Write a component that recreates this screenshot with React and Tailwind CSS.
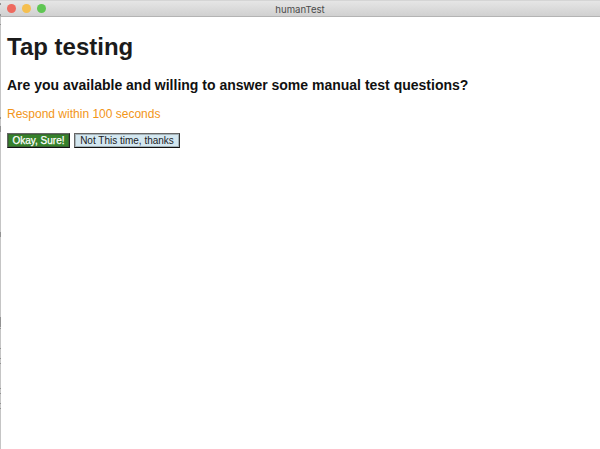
const edgeMarks = [
  ['top', 3, 2], ['upper', 14, 2], ['a', 24, 1], ['b', 117, 2], ['c', 126, 6],
  ['d', 232, 5], ['e', 317, 10], ['f', 328, 1], ['g', 348, 1], ['h', 358, 1],
  ['i', 363, 1], ['j', 388, 1], ['k', 393, 1], ['l', 403, 1], ['m', 408, 1],
];

function TitleBar() {
  return (
    <header className="relative flex h-[17px] shrink-0 items-center justify-center border-t border-b border-t-[#d5d5d5] border-b-[#b4b4b4] bg-linear-to-b from-[#e6e6e6] to-[#d0d0d0]">
      <div className="absolute top-[3px] left-[7px] flex gap-[6px]">
        <span className="size-[9px] rounded-full bg-[#ee6a5f]" />
        <span className="size-[9px] rounded-full bg-[#f5bf4f]" />
        <span className="size-[9px] rounded-full bg-[#5fc653]" />
      </div>
      <h2 className="pt-[2px] font-[Inter,sans-serif] text-[9.6px] leading-[13px] text-[#4b4b4b]">humanTest</h2>
    </header>
  );
}

export default function App() {
  return (
    <div className="relative flex h-[449px] w-[600px] flex-col overflow-hidden bg-white font-['Liberation_Sans',Arial,sans-serif]">
      <TitleBar />
      <main className="flex-1 border-l border-[#c5c5c5] pt-[16px] pl-[6px] text-[#1b1b1b]">
        <h1 className="text-[24px] leading-[28px] font-bold whitespace-nowrap">Tap testing</h1>
        <h3 className="mt-[16px] text-[14px] leading-[16px] font-bold whitespace-nowrap text-[#111]">
          Are you available and willing to answer some manual test questions?
        </h3>
        <p className="mt-[14px] text-[12px] leading-[14px] text-[#f29518]">Respond within 100 seconds</p>
        <div className="mt-[12px] flex gap-[4px] text-[10px] leading-[11px]">
          <button className="h-[15px] w-[63px] border border-t-[#666] border-r-[#222] border-b-[#111] border-l-[#666] bg-[#36812b] whitespace-nowrap text-white shadow-[inset_0_0_0_1px_rgba(60,60,60,0.4)] [-webkit-text-stroke:0.25px_white]">
            Okay, Sure!
          </button>
          <button className="h-[15px] w-[106px] border border-t-[#666] border-r-[#333] border-b-[#111] border-l-[#666] bg-[#d3e7f0] whitespace-nowrap text-[#1b2024] shadow-[inset_0_0_0_1px_rgba(60,60,60,0.3)]">
            Not This time, thanks
          </button>
        </div>
      </main>
      {edgeMarks.map(([id, top, height]) => (
        <span key={id} className="absolute left-0 w-px bg-[#929292]" style={{ top, height }} />
      ))}
    </div>
  );
}
